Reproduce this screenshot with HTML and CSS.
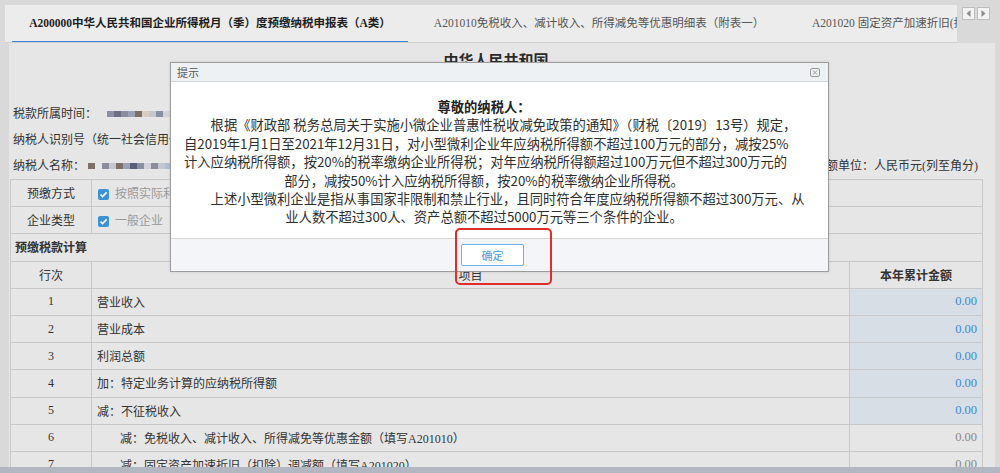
FILE: index.html
```html
<!DOCTYPE html>
<html lang="zh-CN">
<head>
<meta charset="utf-8">
<title>企业所得税月（季）度预缴纳税申报表</title>
<link rel="stylesheet" href="styles.css">
</head>
<body>
<div class="app">
  <div class="tabbar">
    <div class="tabs">
      <div class="tab tab-active">A200000中华人民共和国企业所得税月（季）度预缴纳税申报表（A类）</div>
      <div class="tab tab-second">A201010免税收入、减计收入、所得减免等优惠明细表（附表一）</div>
      <div class="tab tab-third">A201020 固定资产加速折旧(扣除)优惠明细表（附表二）</div>
    </div>
    <div class="tab-arrows">
      <span class="arrow-btn"><svg width="5" height="7" viewBox="0 0 5 7"><path d="M4.5 0 L0.5 3.5 L4.5 7 Z" fill="#8a8a8a"/></svg></span>
      <span class="arrow-btn"><svg width="5" height="7" viewBox="0 0 5 7"><path d="M0.5 0 L4.5 3.5 L0.5 7 Z" fill="#8a8a8a"/></svg></span>
    </div>
  </div>

  <div class="main">
    <div class="sheet">
      <div class="doc-title">中华人民共和国<br>企业所得税月（季）度预缴纳税申报表（A类）</div>

      <div class="info-row">
        <span class="info-label">税款所属时间：</span>
        <span class="mosaic">
          <i class="m1"></i><i class="m2"></i><i class="m3"></i><i class="m4"></i><i class="m5"></i><i class="m6"></i><i class="m7"></i><i class="m8"></i><i class="m9"></i><i class="m10"></i>
        </span>
      </div>
      <div class="info-row">
        <span class="info-label">纳税人识别号（统一社会信用代码）：</span>
      </div>
      <div class="info-row info-split">
        <span class="info-left">
          <span class="info-label">纳税人名称：</span>
          <span class="mosaic mosaic-small"><i class="m5"></i></span>
          <span class="mosaic">
            <i class="m3"></i><i class="m7"></i><i class="m5"></i><i class="m4"></i><i class="m11"></i><i class="m8"></i><i class="m9"></i><i class="m3"></i><i class="m7"></i><i class="m10"></i>
          </span>
        </span>
        <span class="info-right">金额单位：人民币元(列至角分)</span>
      </div>

      <table class="grid">
        <colgroup>
          <col class="col-no">
          <col class="col-item">
          <col class="col-amt">
        </colgroup>
        <tbody>
          <tr>
            <td class="c-center">预缴方式</td>
            <td colspan="2" class="c-check">
              <span class="chk chk-on"><svg width="11" height="11" viewBox="0 0 11 11"><rect x="0" y="0" width="11" height="11" rx="2" fill="#3b93d6"/><path d="M2.5 5.6 L4.6 7.6 L8.6 3.4" stroke="#fff" stroke-width="1.6" fill="none"/></svg></span>
              <span class="chk-text">按照实际利润额预缴</span>
            </td>
          </tr>
          <tr>
            <td class="c-center">企业类型</td>
            <td colspan="2" class="c-check">
              <span class="chk chk-on"><svg width="11" height="11" viewBox="0 0 11 11"><rect x="0" y="0" width="11" height="11" rx="2" fill="#3b93d6"/><path d="M2.5 5.6 L4.6 7.6 L8.6 3.4" stroke="#fff" stroke-width="1.6" fill="none"/></svg></span>
              <span class="chk-text">一般企业</span>
              <span class="chk chk-off"><svg width="11" height="11" viewBox="0 0 11 11"><rect x="0.5" y="0.5" width="10" height="10" rx="2" fill="#f4f4f4" stroke="#b8b8b8"/></svg></span>
              <span class="chk-text">跨地区经营汇总纳税企业总机构</span>
            </td>
          </tr>
          <tr>
            <td colspan="3" class="c-section">预缴税款计算</td>
          </tr>
          <tr class="head-row">
            <td class="c-center">行次</td>
            <td class="c-center">项目</td>
            <td class="c-center c-bold">本年累计金额</td>
          </tr>
          <tr>
            <td class="c-center c-num">1</td>
            <td class="c-item">营业收入</td>
            <td class="c-amt c-calc">0.00</td>
          </tr>
          <tr>
            <td class="c-center c-num">2</td>
            <td class="c-item">营业成本</td>
            <td class="c-amt c-calc">0.00</td>
          </tr>
          <tr>
            <td class="c-center c-num">3</td>
            <td class="c-item">利润总额</td>
            <td class="c-amt c-calc">0.00</td>
          </tr>
          <tr>
            <td class="c-center c-num">4</td>
            <td class="c-item">加：特定业务计算的应纳税所得额</td>
            <td class="c-amt c-calc">0.00</td>
          </tr>
          <tr>
            <td class="c-center c-num">5</td>
            <td class="c-item">减：不征税收入</td>
            <td class="c-amt c-calc">0.00</td>
          </tr>
          <tr>
            <td class="c-center c-num">6</td>
            <td class="c-item c-indent">减：免税收入、减计收入、所得减免等优惠金额（填写A201010）</td>
            <td class="c-amt c-plain">0.00</td>
          </tr>
          <tr>
            <td class="c-center c-num">7</td>
            <td class="c-item c-indent">减：固定资产加速折旧（扣除）调减额（填写A201020）</td>
            <td class="c-amt c-plain">0.00</td>
          </tr>
        </tbody>
      </table>
    </div>
  </div>
  <div class="bottom-bar"></div>
</div>

<div class="dialog">
  <div class="dlg-head">
    <span class="dlg-title">提示</span>
    <span class="dlg-close"><svg width="10" height="9" viewBox="0 0 10 9"><rect x="0.5" y="0.5" width="9" height="8" rx="1.5" fill="none" stroke="#9a9a9a"/><path d="M3 2.5 L7 6.5 M7 2.5 L3 6.5" stroke="#9a9a9a" stroke-width="1"/></svg></span>
  </div>
  <div class="dlg-body">
    <div class="dlg-text">
      <div class="dlg-heading">尊敬的纳税人：</div>
      <p class="dlg-para">根据《财政部 税务总局关于实施小微企业普惠性税收减免政策的通知》（财税〔2019〕13号）规定，<br>自2019年1月1日至2021年12月31日，对小型微利企业年应纳税所得额不超过100万元的部分，减按25%<br>计入应纳税所得额，按20%的税率缴纳企业所得税；对年应纳税所得额超过100万元但不超过300万元的<br>部分，减按50%计入应纳税所得额，按20%的税率缴纳企业所得税。</p>
      <p class="dlg-para">上述小型微利企业是指从事国家非限制和禁止行业，且同时符合年度应纳税所得额不超过300万元、从<br>业人数不超过300人、资产总额不超过5000万元等三个条件的企业。</p>
    </div>
  </div>
  <div class="dlg-foot">
    <button class="dlg-btn" type="button">确定</button>
  </div>
</div>

<div class="highlight"></div>
</body>
</html>
```

FILE: styles.css
```css
* {
  box-sizing: border-box;
}

html, body {
  margin: 0;
  padding: 0;
}

body {
  width: 1000px;
  height: 473px;
  overflow: hidden;
  background: #d9d9d9;
  font-family: "Liberation Serif", "Noto Sans CJK SC", serif;
  color: #383838;
  position: relative;
}

.app {
  height: 473px;
  display: flex;
  flex-direction: column;
}

/* ---------- tab bar ---------- */
.tabbar {
  height: 43px;
  padding-top: 5px;
  display: flex;
  flex: none;
}

.tabs {
  margin-left: 5px;
  width: 952px;
  height: 38px;
  background: #ececec;
  border-bottom: 1px solid #d0d0d0;
  display: flex;
  overflow: hidden;
  flex: none;
}

.tab {
  flex: none;
  height: 37px;
  line-height: 37px;
  font-size: 11.5px;
  white-space: nowrap;
  color: #555;
  text-align: center;
}

.tab-active {
  margin-left: 7px;
  width: 396px;
  color: #1e1e1e;
  font-weight: 600;
  border-bottom: 2px solid #3b83d7;
  line-height: 36px;
  height: 38px;
}

.tab-second {
  width: 382px;
}

.tab-third {
  flex: 1 1 auto;
  min-width: 0;
  overflow: hidden;
  text-align: left;
  padding-left: 22px;
}

.tab-arrows {
  display: flex;
  gap: 2px;
  padding: 2px 0 0 5px;
}

.arrow-btn {
  width: 13px;
  height: 13px;
  border: 1px solid #bdbdbd;
  background: #f3f3f3;
  display: flex;
  align-items: center;
  justify-content: center;
}

/* ---------- main sheet ---------- */
.main {
  flex: 1 1 auto;
  min-height: 0;
  display: flex;
  overflow: hidden;
}

.sheet {
  margin-left: 9px;
  width: 986px;
  background: #e6e6e6;
  padding: 0 13px 0 1px;
  overflow: hidden;
}

.doc-title {
  height: 58px;
  padding-top: 8px;
  line-height: 20px;
  font-size: 15px;
  font-weight: 700;
  text-align: center;
  color: #2a2a2a;
  overflow: hidden;
}

.info-row {
  height: 26px;
  line-height: 26px;
  font-size: 12px;
  padding-left: 3px;
  display: flex;
  align-items: center;
  white-space: nowrap;
  color: #333;
}

.info-split {
  justify-content: space-between;
  padding-right: 4px;
}

.info-left {
  display: flex;
  align-items: center;
}

.mosaic {
  display: inline-flex;
  margin-left: 10px;
  height: 6px;
}

.mosaic-small {
  margin-left: 3px;
  margin-right: -3px;
}

.mosaic i {
  display: block;
  width: 7px;
  height: 6px;
}

.m1 { background: #8c90a6; }
.m2 { background: #6d7085; }
.m3 { background: #8b8d9f; }
.m4 { background: #9ba1b6; }
.m5 { background: #7d7068; }
.m6 { background: #d6cfbf; }
.m7 { background: #c6c6cf; }
.m8 { background: #8990a1; }
.m9 { background: #d2d2d8; }
.m10 { background: #a9c0d8; }
.m11 { background: #5a5e79; }

/* ---------- table ---------- */
.grid {
  width: 972px;
  border-collapse: collapse;
  table-layout: fixed;
  font-size: 12px;
  color: #333;
}

.col-no { width: 81px; }
.col-item { width: 758px; }
.col-amt { width: 133px; }

.grid tr {
  height: 27.2px;
}

.grid td {
  border: 1px solid #c8c8c8;
  padding: 0;
  white-space: nowrap;
  overflow: hidden;
  vertical-align: middle;
}

.c-center {
  text-align: center;
}

.c-bold {
  font-weight: 700;
}

.c-num {
  font-size: 12px;
}

.c-item {
  padding-left: 5px !important;
}

.c-indent {
  padding-left: 28px !important;
}

.c-section {
  padding-left: 4px !important;
  font-weight: 700;
}

.c-check {
  padding-left: 6px !important;
}

.chk {
  display: inline-block;
  width: 11px;
  height: 11px;
  vertical-align: -2px;
}

.chk svg {
  display: block;
}

.chk-text {
  color: #999;
  margin-left: 3px;
}

.chk-off {
  margin-left: 8px;
}

.c-amt {
  text-align: right;
  padding-right: 5px !important;
  font-size: 12.5px;
}

.c-calc {
  background: #d8dee6;
  color: #3b8ad6;
}

.c-plain {
  color: #8a8a8a;
}

.bottom-bar {
  height: 6px;
  flex: none;
  background: #b3b7c1;
}

/* ---------- dialog ---------- */
.dialog {
  position: absolute;
  left: 170px;
  top: 62px;
  width: 659px;
  height: 210px;
  border: 1px solid #9c9c9c;
  background: #fff;
  display: flex;
  flex-direction: column;
  box-shadow: 0 0 3px rgba(0, 0, 0, 0.12);
}

.dlg-head {
  height: 19px;
  flex: none;
  background: #eef1f4;
  border-bottom: 1px solid #d2d6db;
  display: flex;
  align-items: center;
  justify-content: space-between;
  padding: 0 8px 0 6px;
}

.dlg-title {
  font-family: "Noto Sans CJK SC", sans-serif;
  font-size: 11px;
  color: #555;
}

.dlg-close {
  display: flex;
  align-items: center;
}

.dlg-body {
  flex: 1 1 auto;
  background: #fff;
  padding: 16px 44px 0 13px;
}

.dlg-text {
  width: 600px;
  font-family: "Noto Sans CJK SC", sans-serif;
  font-size: 13.3px;
  line-height: 18.4px;
  color: #2e2e2e;
  text-align: center;
}

.dlg-heading {
  font-weight: 700;
  color: #222;
}

.dlg-para {
  margin: 0;
  text-indent: 2em;
  white-space: nowrap;
}

.dlg-foot {
  height: 33px;
  flex: none;
  background: #f3f5f8;
  border-top: 1px solid #d6d6d6;
  display: flex;
  justify-content: center;
  align-items: flex-start;
  padding: 5px 14px 0 0;
}

.dlg-btn {
  width: 63px;
  height: 22px;
  border: 1px solid #6fb0e8;
  border-radius: 2px;
  background: #fff;
  color: #4a9de0;
  font-family: "Noto Sans CJK SC", sans-serif;
  font-size: 11px;
  padding: 0;
}

.highlight {
  position: absolute;
  left: 455px;
  top: 228px;
  width: 97px;
  height: 57px;
  border: 2px solid #e22b2b;
  border-radius: 5px;
}
```
